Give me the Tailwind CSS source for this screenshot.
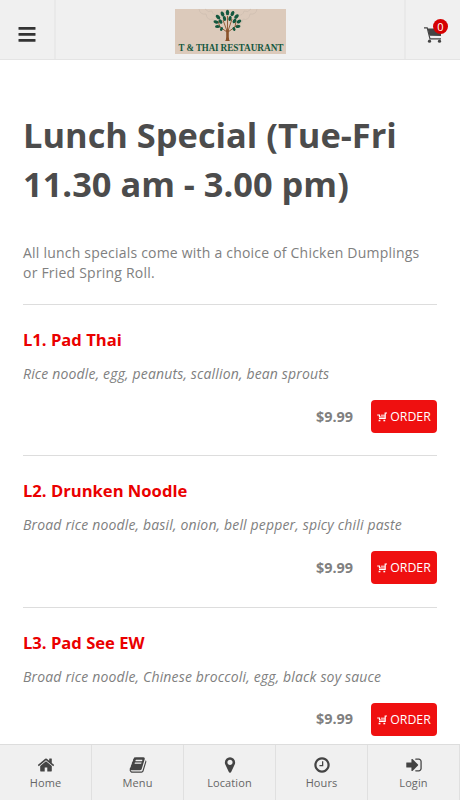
<!DOCTYPE html>
<html lang="en">
<head>
  <meta charset="UTF-8" />
  <meta name="viewport" content="width=device-width, initial-scale=1.0"/>
  <title>T &amp; Thai Restaurant</title>
  <script src="https://cdn.jsdelivr.net/npm/@tailwindcss/browser@4"></script>
</head>
<body class="bg-white font-['Open_Sans',sans-serif] text-[#808080] h-[800px] overflow-hidden flex flex-col">

  <!-- Icons used more than once -->
  <svg class="hidden">
    <symbol id="order-cart" viewBox="0 0 10 10">
      <path d="M10 1H8.200V6.500H2M.2 3h2.300v2H8" fill="none" stroke="currentColor" stroke-width="1.200"/>
      <path d="M4 3.200h4" fill="none" stroke="currentColor" stroke-width=".9"/>
      <rect x="1.600" y="7.800" width="1.800" height="1.500" fill="currentColor"/>
      <rect x="6.400" y="7.800" width="1.800" height="1.500" fill="currentColor"/>
    </symbol>
  </svg>

  <!-- Header -->
  <header class="h-[60px] shrink-0 bg-[#f0f0f0] border-b border-[#e4e4e4] flex justify-between items-center">
    <button class="w-14 h-full pt-[9px] border-r-2 border-[#e9e9e9] flex items-center justify-center">
      <svg class="w-[18px] h-[15px] text-[#333]" viewBox="0 0 18 15" fill="currentColor">
        <rect x="0.5" y="0" width="17" height="2.800" rx=".5"/>
        <rect x="0.5" y="6" width="17" height="2.800" rx=".5"/>
        <rect x="0.5" y="12" width="17" height="2.800" rx=".5"/>
      </svg>
    </button>
    <svg class="w-[111px] h-[45px] mt-1 overflow-visible" viewBox="0 0 111 45">
      <rect width="111" height="45" fill="#dccabb"/>
      <g fill="none" stroke="#cfbfb1" stroke-width=".8">
        <path d="M24 0q1 6 7 5q1 7 7 5q1 7 7 5M82 0q-1 6-7 5q-1 7-7 5q-1 7-7 5"/>
        <path d="M30 0q3 4 7 2q1 5 6 4M76 0q-3 4-7 2q-1 5-6 4"/>
      </g>
      <g transform="translate(-1.500 0)">
        <path d="M51.500 32q1.200-1 1.200-4V21h2.600v7q0 3 1.200 4z" fill="#8a532b"/>
        <path d="M54 24V7M53.500 23l-7-5-2-6M54.500 23l7-5 1-6M53.500 22l-4-11M54.500 22l4-12M47 18l-4-1M61 18l3-2" fill="none" stroke="#8a532b" stroke-width=".9"/>
        <g fill="#14583f">
          <ellipse cx="54" cy="3.500" rx="1.700" ry="2.700"/>
          <ellipse cx="49" cy="5" rx="1.700" ry="2.700" transform="rotate(-25 49 5)"/>
          <ellipse cx="59" cy="4.500" rx="1.700" ry="2.700" transform="rotate(25 59 4.500)"/>
          <ellipse cx="44.500" cy="8" rx="1.700" ry="2.700" transform="rotate(-45 44.500 8)"/>
          <ellipse cx="63" cy="7.500" rx="1.700" ry="2.700" transform="rotate(45 63 7.500)"/>
          <ellipse cx="51" cy="9.500" rx="1.600" ry="2.500" transform="rotate(-15 51 9.500)"/>
          <ellipse cx="56.500" cy="9.500" rx="1.600" ry="2.500" transform="rotate(15 56.500 9.500)"/>
          <ellipse cx="61" cy="12" rx="1.600" ry="2.500" transform="rotate(35 61 12)"/>
          <ellipse cx="47" cy="12.500" rx="1.600" ry="2.500" transform="rotate(-35 47 12.500)"/>
          <ellipse cx="42.500" cy="13" rx="1.600" ry="2.500" transform="rotate(-75 42.500 13)"/>
          <ellipse cx="65.500" cy="12.500" rx="1.600" ry="2.500" transform="rotate(60 65.500 12.500)"/>
          <ellipse cx="44" cy="17.500" rx="1.500" ry="2.500" transform="rotate(-90 44 17.500)"/>
          <ellipse cx="64.500" cy="17.500" rx="1.500" ry="2.500" transform="rotate(80 64.500 17.500)"/>
          <ellipse cx="48" cy="20" rx="1.300" ry="2" transform="rotate(30 48 20)"/>
          <ellipse cx="60.500" cy="20" rx="1.300" ry="2" transform="rotate(-30 60.500 20)"/>
        </g>
      </g>
      <g font-family="Liberation Serif, serif" font-weight="700" font-size="10" fill="#14583f">
        <text x="3.500" y="41.500" textLength="40" lengthAdjust="spacingAndGlyphs">T &amp; THAI</text>
        <text x="45.500" y="41.500" textLength="63" lengthAdjust="spacingAndGlyphs">RESTAURANT</text>
      </g>
    </svg>
    <button class="relative w-14 h-full border-l-2 border-[#e9e9e9] flex items-center justify-center">
      <svg class="w-[18px] h-[16px] mt-[10px]" viewBox="0 0 18 16">
        <path d="M0 .8h3.200l2.800 11h11" fill="none" stroke="#444" stroke-width="1.200"/>
        <path d="M3.500 1.500H17v7.500L5.500 8.700z" fill="#444"/>
        <circle cx="5.500" cy="14.200" r="1.600" fill="#444"/>
        <circle cx="15.500" cy="14.200" r="1.600" fill="#444"/>
      </svg>
      <span class="absolute left-[27px] top-[19px] size-[15px] rounded-full bg-[#d50000] text-white text-[11px] leading-[15px] text-center">0</span>
    </button>
  </header>

  <!-- Menu section -->
  <main class="flex-1 min-h-0 overflow-hidden px-[23px] pt-[50px]">
    <h1 class="text-[34.400px] leading-[49px] font-bold text-[#4c4c4c]">Lunch Special (Tue-Fri<br>11.30 am - 3.00 pm)</h1>
    <p class="mt-[35px] text-[14px] leading-5 tracking-[0.210px]">All lunch specials come with a choice of Chicken Dumplings<br>or Fried Spring Roll.</p>

    <div class="mt-[21px]">
      <article class="h-[151.400px] border-t border-[#ddd] pt-[23px]">
        <h2 class="text-[16.600px] leading-6 font-bold text-[#ea0000]">L1. Pad Thai</h2>
        <p class="mt-3 text-[14px] leading-5 tracking-[0.160px] italic">Rice noodle, egg, peanuts, scallion, bean sprouts</p>
        <div class="mt-4 flex justify-end items-center gap-[18px]">
          <span class="text-[14.400px] font-bold">$9.99</span>
          <button class="w-[66px] h-[33px] pt-px rounded bg-[#ef1010] text-white text-[12.300px] flex items-center justify-center gap-[3px]"><svg class="size-[10px]"><use href="#order-cart"/></svg>ORDER</button>
        </div>
      </article>

      <article class="h-[151.400px] border-t border-[#ddd] pt-[23px]">
        <h2 class="text-[16.600px] leading-6 font-bold text-[#ea0000]">L2. Drunken Noodle</h2>
        <p class="mt-3 text-[14px] leading-5 tracking-[0.160px] italic">Broad rice noodle, basil, onion, bell pepper, spicy chili paste</p>
        <div class="mt-4 flex justify-end items-center gap-[18px]">
          <span class="text-[14.400px] font-bold">$9.99</span>
          <button class="w-[66px] h-[33px] pt-px rounded bg-[#ef1010] text-white text-[12.300px] flex items-center justify-center gap-[3px]"><svg class="size-[10px]"><use href="#order-cart"/></svg>ORDER</button>
        </div>
      </article>

      <article class="h-[151.400px] border-t border-[#ddd] pt-[23px]">
        <h2 class="text-[16.600px] leading-6 font-bold text-[#ea0000]">L3. Pad See EW</h2>
        <p class="mt-3 text-[14px] leading-5 tracking-[0.160px] italic">Broad rice noodle, Chinese broccoli, egg, black soy sauce</p>
        <div class="mt-4 flex justify-end items-center gap-[18px]">
          <span class="text-[14.400px] font-bold">$9.99</span>
          <button class="w-[66px] h-[33px] pt-px rounded bg-[#ef1010] text-white text-[12.300px] flex items-center justify-center gap-[3px]"><svg class="size-[10px]"><use href="#order-cart"/></svg>ORDER</button>
        </div>
      </article>
    </div>
  </main>

  <!-- Bottom navigation -->
  <nav class="h-14 shrink-0 grid grid-cols-5 bg-[#f0f0f0] border-t border-[#ddd] text-[#444] text-[11px] leading-4 tracking-[0.100px]">
    <a class="border-r border-[#e0e0e0] flex flex-col items-center pt-[11px] gap-px">
      <svg class="size-[18px]" viewBox="0 0 1792 1792" fill="currentColor"><path d="M1472 992v480q0 26-19 45t-45 19h-384v-384h-256v384h-384q-26 0-45-19t-19-45v-480q0-1 .5-3t.5-3l575-474 575 474q1 2 1 6zm223-69l-62 74q-8 9-21 11h-3q-13 0-21-7l-692-577-692 577q-12 8-24 7-13-2-21-11l-62-74q-8-10-7-23.5t11-21.5l719-599q32-26 76-26t76 26l244 204v-195q0-14 9-23t23-9h192q14 0 23 9t9 23v408l219 182q10 8 11 21.5t-7 23.5z"/></svg>
      <span class="text-[#666]">Home</span>
    </a>
    <a class="border-r border-[#e0e0e0] flex flex-col items-center pt-[11px] gap-px">
      <svg class="size-[18px]" viewBox="0 0 1792 1792" fill="currentColor"><path d="M1703 478q40 57 18 129l-275 906q-19 64-76.5 107.5t-122.5 43.5h-923q-77 0-148.5-53.5t-99.5-131.5q-24-67-2-127 0-4 3-27t4-37q1-8-3-21.5t-3-19.5q2-11 8-21t16.5-23.5 16.5-23.5q23-38 45-91.5t30-91.5q3-10 .5-30t-.5-28q3-11 17-28t17-23q21-36 42-92t25-90q1-9-2.5-32t.5-28q4-13 22-30.5t22-22.5q19-26 42.5-84.5t27.5-96.5q1-8-3-25.5t-2-26.5q2-8 9-18t18-23 17-21q8-12 16.5-30.5t15-35 16-36 19.5-32 26.5-23.5 36-11.5 47.5 5.5l-1 3q38-9 51-9h761q74 0 114 56t18 130l-274 906q-36 119-71.5 153.5t-128.5 34.5h-869q-27 0-38 15-11 16-1 43 24 70 144 70h923q29 0 56-15.5t35-41.5l300-987q7-22 5-57 38 15 59 43zm-1064 2q-4 13 2 22.5t20 9.5h608q13 0 25.5-9.5t16.5-22.5l21-64q4-13-2-22.5t-20-9.5h-608q-13 0-25.5 9.5t-16.5 22.5zm-83 256q-4 13 2 22.5t20 9.5h608q13 0 25.5-9.5t16.5-22.5l21-64q4-13-2-22.5t-20-9.5h-608q-13 0-25.5 9.5t-16.5 22.5z"/></svg>
      <span class="text-[#666]">Menu</span>
    </a>
    <a class="border-r border-[#e0e0e0] flex flex-col items-center pt-[11px] gap-px">
      <svg class="size-[18px]" viewBox="0 0 1792 1792" fill="currentColor"><path d="M1152 640q0-106-75-181t-181-75-181 75-75 181 75 181 181 75 181-75 75-181zm256 0q0 109-33 179l-364 774q-16 33-47.5 52t-67.5 19-67.5-19-46.5-52l-365-774q-33-70-33-179 0-212 150-362t362-150 362 150 150 362z"/></svg>
      <span class="text-[#666]">Location</span>
    </a>
    <a class="border-r border-[#e0e0e0] flex flex-col items-center pt-[11px] gap-px">
      <svg class="size-[18px]" viewBox="0 0 1792 1792" fill="currentColor"><path d="M1024 544v448q0 14-9 23t-23 9h-320q-14 0-23-9t-9-23v-64q0-14 9-23t23-9h224v-352q0-14 9-23t23-9h64q14 0 23 9t9 23zm416 352q0-148-73-273t-198-198-273-73-273 73-198 198-73 273 73 273 198 198 273 73 273-73 198-198 73-273zm224 0q0 209-103 385.5t-279.5 279.5-385.5 103-385.5-103-279.5-279.5-103-385.5 103-385.5 279.5-279.5 385.5-103 385.5 103 279.5 279.5 103 385.5z"/></svg>
      <span class="text-[#666]">Hours</span>
    </a>
    <a class="border-r border-[#e0e0e0] flex flex-col items-center pt-[11px] gap-px">
      <svg class="size-[18px]" viewBox="0 0 1792 1792" fill="currentColor"><path d="M1312 896q0 26-19 45l-544 544q-19 19-45 19t-45-19-19-45v-288h-448q-26 0-45-19t-19-45v-384q0-26 19-45t45-19h448v-288q0-26 19-45t45-19 45 19l544 544q19 19 19 45zm352-352v704q0 119-84.5 203.5t-203.5 84.5h-320q-13 0-22.5-9.5t-9.5-22.5q0-4-1-20t-.5-26.5 3-23.5 10-19.5 20.5-6.5h320q66 0 113-47t47-113v-704q0-66-47-113t-113-47h-312l-11.5-1-11.5-3-8-5.5-7-9-2-13.5q0-4-1-20t-.5-26.5 3-23.5 10-19.5 20.5-6.5h320q119 0 203.5 84.5t84.5 203.5z"/></svg>
      <span class="text-[#666]">Login</span>
    </a>
  </nav>

</body>
</html>
